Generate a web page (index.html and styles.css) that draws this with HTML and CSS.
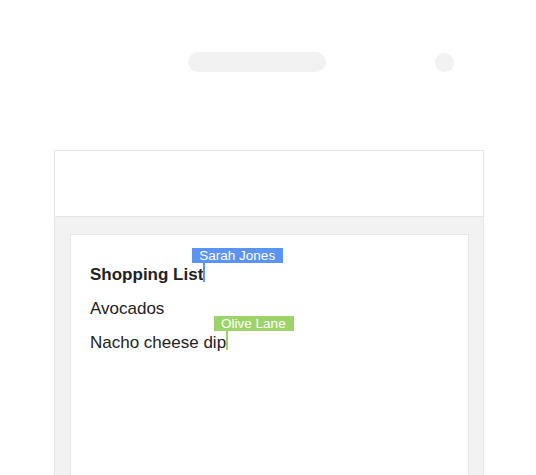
FILE: index.html
```html
<!DOCTYPE html>
<html>
<head>
<meta charset="utf-8">
<link rel="stylesheet" href="styles.css">
</head>
<body>
<div class="top">
  <div class="pill"></div>
  <div class="dot"></div>
</div>
<div class="frame">
  <div class="header"></div>
  <div class="body">
    <div class="card">
      <div class="line title">Shopping List<span class="cursor blue"><span class="tag">Sarah Jones</span></span></div>
      <div class="line">Avocados</div>
      <div class="line">Nacho cheese dip<span class="cursor green"><span class="tag">Olive Lane</span></span></div>
    </div>
  </div>
</div>
</body>
</html>
```
FILE: styles.css
```css
html, body {
  margin: 0;
  padding: 0;
  height: 475px;
  overflow: hidden;
  background: #fff;
  font-family: "Liberation Sans", Arial, sans-serif;
}
.top {
  display: flex;
  align-items: center;
  gap: 109px;
  padding: 52px 0 0 188px;
}
.pill {
  width: 138px;
  height: 20px;
  border-radius: 10px;
  background: #f2f2f2;
}
.dot {
  width: 19px;
  height: 19px;
  border-radius: 50%;
  background: #f2f2f2;
}
.frame {
  box-sizing: border-box;
  width: 430px;
  margin: 78px 0 0 54px;
  border: 1px solid #e6e6e6;
}
.header {
  height: 65px;
  border-bottom: 1px solid #e6e6e6;
  background: #fff;
}
.body {
  background: #f2f2f2;
  padding: 17px 14px 0 15px;
}
.card {
  background: #fff;
  border: 1px solid #e6e6e6;
  height: 400px;
  padding: 23px 19px 0;
}
.line {
  font-size: 17px;
  line-height: 34px;
  color: #222;
}
.title {
  font-weight: bold;
}
.cursor {
  position: relative;
  display: inline-block;
  width: 2px;
  height: 19px;
  vertical-align: -2px;
}
.cursor.blue { background: #5b94f5; }
.cursor.green { background: #9cd46a; }
.tag {
  position: absolute;
  bottom: 100%;
  left: -11px;
  height: 15px;
  padding: 0 8px 0 7px;
  font-size: 13.5px;
  line-height: 15px;
  font-weight: normal;
  color: #fff;
  white-space: nowrap;
}
.blue .tag { background: #5b94f5; }
.green .tag { background: #9cd46a; left: -12px; }
```
